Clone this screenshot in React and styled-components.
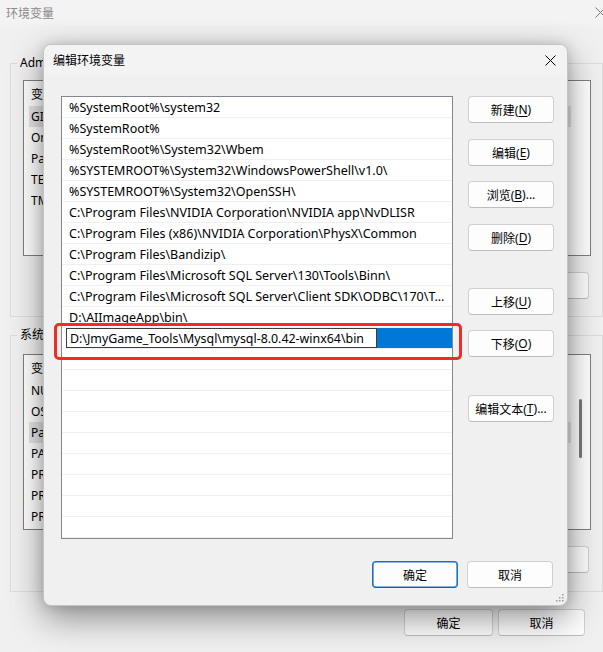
import React from "react";
import styled, { createGlobalStyle } from "styled-components";

const Global = createGlobalStyle`
  html, body { margin: 0; padding: 0; width: 603px; height: 652px; overflow: hidden; background: #f0f0f0; }
  body { font-family: "Noto Sans", "Noto Sans CJK SC", sans-serif; font-size: 12px; color: #000; }
  #root { width: 603px; height: 652px; position: relative; overflow: hidden; }
  * { box-sizing: border-box; }
  u { text-underline-offset: 2px; }
`;

/* ---------- background window ---------- */
const BgWindow = styled.div`
  width: 623px;
  height: 652px;
  background: #f0f0f0;
  display: flex;
  flex-direction: column;
`;
const BgTitleBar = styled.div`
  height: 25px;
  display: flex;
  align-items: center;
  justify-content: space-between;
  padding-left: 6px;
  background: #f3f3f3;
  color: #8a8a8a;
`;
const CloseBox = styled.div`
  width: ${(p) => p.$w || 46}px;
  height: 100%;
  display: flex;
  align-items: center;
  justify-content: center;
`;
const BgBody = styled.div`
  display: flex;
  flex-direction: column;
  padding-left: 10px;
`;
const GroupBox = styled.div`
  position: relative;
  width: 593px;
  height: ${(p) => p.$h}px;
  margin-top: ${(p) => p.$mt}px;
  border: 1px solid #dcdcdc;
  padding: ${(p) => p.$pt}px 11px 0 12px;
  display: flex;
  flex-direction: column;
  gap: 16px;
`;
const Legend = styled.span`
  position: absolute;
  top: -9px;
  left: 6px;
  padding: 0 3px;
  background: #f0f0f0;
  line-height: 16px;
`;
const BgList = styled.div`
  height: ${(p) => p.$h}px;
  border: 1px solid #7f7f7f;
  background: #fff;
  display: flex;
`;
const BgListContent = styled.div`
  flex: 1;
  min-width: 0;
  display: flex;
  flex-direction: column;
`;
const BgHeader = styled.div`
  height: 25px;
  display: flex;
  align-items: center;
  padding-left: 7px;
`;
const BgRow = styled.div`
  height: 21px;
  margin-left: 5px;
  padding-left: 2px;
  display: flex;
  align-items: center;
  white-space: nowrap;
  background: ${(p) => (p.$sel ? "#e5e5e5" : "transparent")};
`;
const ScrollTrack = styled.div`
  width: 19px;
  flex: none;
  display: flex;
  justify-content: center;
  align-items: flex-start;
`;
const ScrollThumb = styled.div`
  width: 3px;
  height: 59px;
  margin-top: 44px;
  border-radius: 2px;
  background: #7a7a7a;
`;
const BgButtons = styled.div`
  display: flex;
  justify-content: flex-end;
  gap: 8px;
  padding-right: 2px;
`;
const BgFooter = styled.div`
  display: flex;
  gap: 5px;
  padding-left: 394px;
  margin-top: 17px;
`;

/* ---------- shared button ---------- */
const Button = styled.button`
  width: ${(p) => p.$w || 86}px;
  height: 27px;
  margin-top: ${(p) => p.$mt || 0}px;
  flex: none;
  border: 1px solid ${(p) => (p.$primary ? "#1a6fc4" : "#d0d0d0")};
  border-bottom-color: ${(p) => (p.$primary ? "#0f5fb0" : "#bdbdbd")};
  border-radius: 4px;
  background: #fdfdfd;
  font-family: inherit;
  font-size: 12px;
  color: #000;
  padding: 0;
  display: flex;
  align-items: center;
  justify-content: center;
  white-space: nowrap;
  box-shadow: ${(p) => (p.$primary ? "inset 0 0 0 0.6px #1a6fc4" : "none")};
`;

/* ---------- dialog ---------- */
const Dialog = styled.div`
  position: absolute;
  left: 43px;
  top: 44px;
  width: 525px;
  height: 562px;
  border-radius: 8px;
  border: 1px solid #c4c4c4;
  background: #f0f0f0;
  box-shadow: 0 12px 34px rgba(0, 0, 0, 0.42), 0 0 12px rgba(0, 0, 0, 0.14);
  display: flex;
  flex-direction: column;
  overflow: hidden;
`;
const DlgTitleBar = styled.div`
  height: 30px;
  flex: none;
  display: flex;
  align-items: center;
  justify-content: space-between;
  padding-left: 9px;
  background: #f3f3f3;
`;
const DlgBody = styled.div`
  display: flex;
  gap: 15px;
  padding: 21px 14px 0 17px;
`;
const PathList = styled.div`
  width: 392px;
  height: 443px;
  flex: none;
  border: 1px solid #828790;
  background: #fff;
  display: flex;
  flex-direction: column;
  overflow: hidden;
  font-size: 12.5px;
`;
const PathRow = styled.div`
  height: 21px;
  flex: none;
  border-bottom: 1px solid #f0f0f0;
  padding: 2px 5px 0 7px;
  line-height: 18px;
  white-space: nowrap;
  overflow: hidden;
  text-overflow: ellipsis;
`;
const EditRow = styled.div`
  height: 21px;
  flex: none;
  border-bottom: 1px solid #f0f0f0;
  padding-left: 4px;
  display: flex;
`;
const SelHighlight = styled.div`
  flex: 1;
  height: 20px;
  background: #0078d7;
  display: flex;
`;
const EditBox = styled.div`
  width: 311px;
  height: 20px;
  border: 1px solid #3c3c3c;
  background: #fff;
  padding: 1px 0 0 3px;
  line-height: 17px;
  font-size: 12.4px;
  white-space: nowrap;
  overflow: hidden;
`;
const ButtonColumn = styled.div`
  display: flex;
  flex-direction: column;
`;
const DlgFooter = styled.div`
  display: flex;
  justify-content: flex-end;
  gap: 9px;
  padding: 22px 14px 0 0;
`;
const Annotation = styled.div`
  position: absolute;
  left: 10px;
  top: 278px;
  width: 408px;
  height: 37px;
  border: 3px solid #f22c24;
  border-radius: 5px;
  pointer-events: none;
`;
const Grip = styled.svg`
  position: absolute;
  right: 3px;
  bottom: 3px;
`;

const XIcon = ({ color = "#000" }) => (
  <svg width="11" height="11" viewBox="0 0 11 11">
    <path d="M0.5 0.5 L10.5 10.5 M10.5 0.5 L0.5 10.5" stroke={color} strokeWidth="1" fill="none" />
  </svg>
);

const paths = [
  "%SystemRoot%\\system32",
  "%SystemRoot%",
  "%SystemRoot%\\System32\\Wbem",
  "%SYSTEMROOT%\\System32\\WindowsPowerShell\\v1.0\\",
  "%SYSTEMROOT%\\System32\\OpenSSH\\",
  "C:\\Program Files\\NVIDIA Corporation\\NVIDIA app\\NvDLISR",
  "C:\\Program Files (x86)\\NVIDIA Corporation\\PhysX\\Common",
  "C:\\Program Files\\Bandizip\\",
  "C:\\Program Files\\Microsoft SQL Server\\130\\Tools\\Binn\\",
  "C:\\Program Files\\Microsoft SQL Server\\Client SDK\\ODBC\\170\\Tools\\Binn\\",
  "D:\\AIImageApp\\bin\\",
];

const userVars = ["GIT_HOME", "OneDrive", "Path", "TEMP", "TMP"];
const sysVars = ["NUMBER_OF_PROCESSORS", "OS", "Path", "PATHEXT", "PROCESSOR_ARCHITECTURE", "PROCESSOR_IDENTIFIER", "PROCESSOR_LEVEL"];

const sideButtons = [
  { label: "新建", key: "N", mt: 0 },
  { label: "编辑", key: "E", mt: 16 },
  { label: "浏览", key: "B", mt: 15, dots: true },
  { label: "删除", key: "D", mt: 16 },
  { label: "上移", key: "U", mt: 37 },
  { label: "下移", key: "O", mt: 15 },
  { label: "编辑文本", key: "T", mt: 38, dots: true },
];

export default function App() {
  return (
    <>
      <Global />
      <BgWindow>
        <BgTitleBar>
          <span>环境变量</span>
          <CloseBox>
            <XIcon color="#777" />
          </CloseBox>
        </BgTitleBar>
        <BgBody>
          <GroupBox $mt={38} $h={254} $pt={16}>
            <Legend>Administrator 的用户变量(U)</Legend>
            <BgList $h={176}>
              <BgListContent>
                <BgHeader>变量</BgHeader>
                {userVars.map((v, i) => (
                  <BgRow key={v} $sel={i === 0}>
                    {v}
                  </BgRow>
                ))}
              </BgListContent>
              <ScrollTrack />
            </BgList>
            <BgButtons>
              <Button>新建(N)...</Button>
              <Button>编辑(E)...</Button>
              <Button>删除(D)</Button>
            </BgButtons>
          </GroupBox>
          <GroupBox $mt={18} $h={257} $pt={18}>
            <Legend>系统变量(S)</Legend>
            <BgList $h={176}>
              <BgListContent>
                <BgHeader>变量</BgHeader>
                {sysVars.map((v, i) => (
                  <BgRow key={v} $sel={i === 2}>
                    {v}
                  </BgRow>
                ))}
              </BgListContent>
              <ScrollTrack>
                <ScrollThumb />
              </ScrollTrack>
            </BgList>
            <BgButtons>
              <Button>新建(W)...</Button>
              <Button>编辑(I)...</Button>
              <Button>删除(L)</Button>
            </BgButtons>
          </GroupBox>
          <BgFooter>
            <Button $w={89}>确定</Button>
            <Button $w={87}>取消</Button>
          </BgFooter>
        </BgBody>
      </BgWindow>

      <Dialog>
        <DlgTitleBar>
          <span>编辑环境变量</span>
          <CloseBox $w={34}>
            <XIcon />
          </CloseBox>
        </DlgTitleBar>
        <DlgBody>
          <PathList>
            {paths.map((p) => (
              <PathRow key={p}>{p}</PathRow>
            ))}
            <EditRow>
              <SelHighlight>
                <EditBox>D:\JmyGame_Tools\Mysql\mysql-8.0.42-winx64\bin</EditBox>
              </SelHighlight>
            </EditRow>
            {Array.from({ length: 9 }).map((_, i) => (
              <PathRow key={"e" + i} />
            ))}
          </PathList>
          <ButtonColumn>
            {sideButtons.map((b) => (
              <Button key={b.key} $mt={b.mt}>
                {b.label}(<u>{b.key}</u>){b.dots ? "..." : ""}
              </Button>
            ))}
          </ButtonColumn>
        </DlgBody>
        <DlgFooter>
          <Button $primary>确定</Button>
          <Button>取消</Button>
        </DlgFooter>
        <Annotation />
        <Grip width="8" height="8" viewBox="0 0 8 8">
          {[
            [6.5, 0.5],
            [6.5, 3.5],
            [3.5, 3.5],
            [6.5, 6.5],
            [3.5, 6.5],
            [0.5, 6.5],
          ].map(([x, y], i) => (
            <rect key={i} x={x - 0.5} y={y - 0.5} width="1.5" height="1.5" fill="#9a9a9a" />
          ))}
        </Grip>
      </Dialog>
    </>
  );
}
